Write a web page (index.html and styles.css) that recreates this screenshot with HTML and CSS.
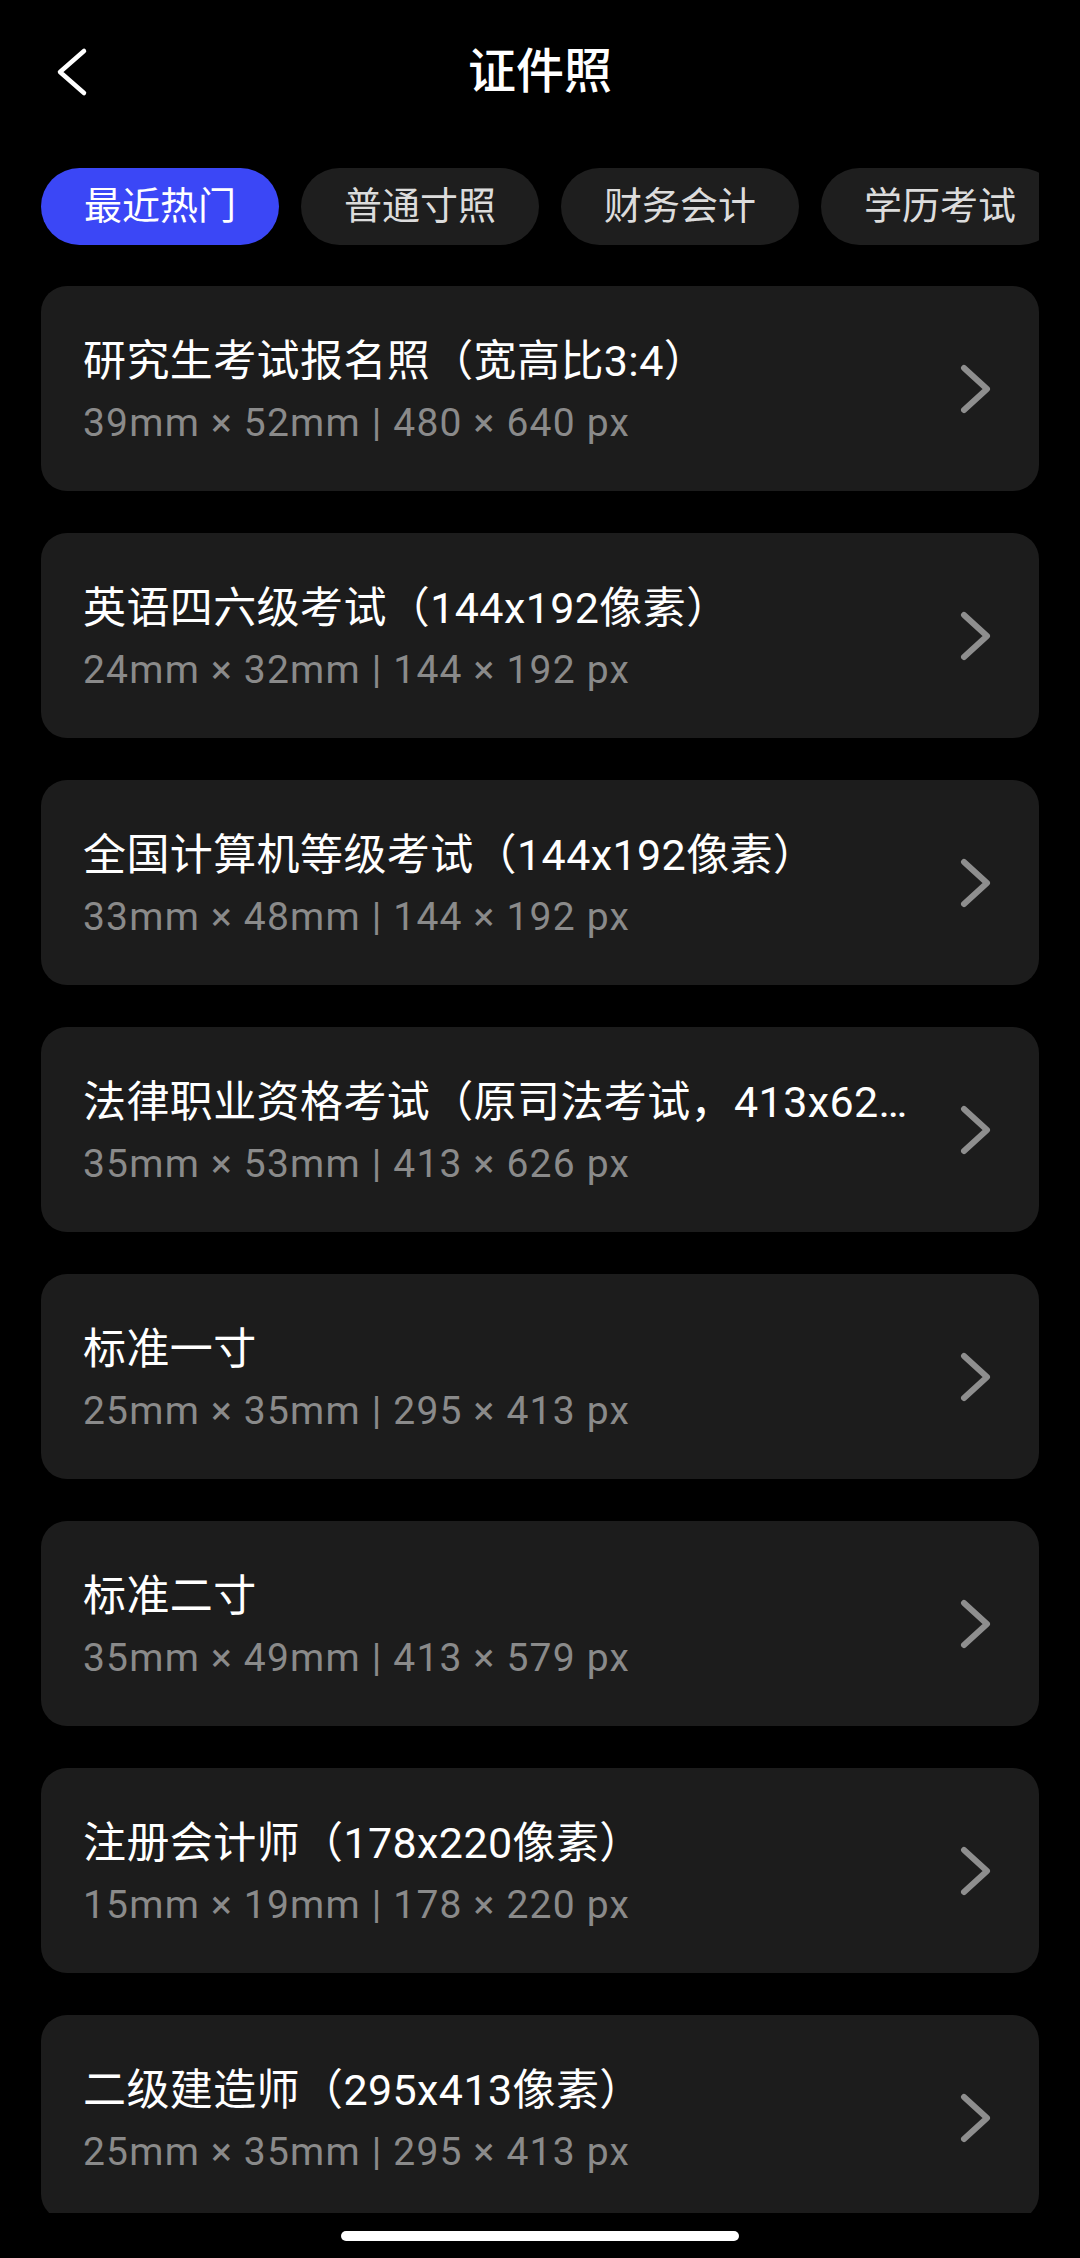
FILE: index.html
```html
<!DOCTYPE html>
<html lang="zh-CN">
<head>
<meta charset="utf-8">
<title>证件照</title>
<link rel="stylesheet" href="styles.css">
</head>
<body>
<div class="page">
  <header class="header">
    <button class="back" aria-label="返回">
      <svg width="36" height="50" viewBox="0 0 36 50"><path d="M30 4 L6 25 L30 46" fill="none" stroke="#fff" stroke-width="4.5" stroke-linecap="round" stroke-linejoin="round"/></svg>
    </button>
    <h1 class="title">证件照</h1>
  </header>

  <nav class="tabs">
    <div class="tab active">最近热门</div>
    <div class="tab">普通寸照</div>
    <div class="tab">财务会计</div>
    <div class="tab">学历考试</div>
  </nav>

  <main class="list">
    <div class="card">
      <div class="info"><div class="name">研究生考试报名照（宽高比3:4）</div><div class="spec">39mm × 52mm | 480 × 640 px</div></div>
      <svg class="chev" width="34" height="50" viewBox="0 0 34 50"><path d="M5 4 L28 25 L5 46" fill="none" stroke="#8e8e8e" stroke-width="6" stroke-linecap="round" stroke-linejoin="round"/></svg>
    </div>
    <div class="card">
      <div class="info"><div class="name">英语四六级考试（144x192像素）</div><div class="spec">24mm × 32mm | 144 × 192 px</div></div>
      <svg class="chev" width="34" height="50" viewBox="0 0 34 50"><path d="M5 4 L28 25 L5 46" fill="none" stroke="#8e8e8e" stroke-width="6" stroke-linecap="round" stroke-linejoin="round"/></svg>
    </div>
    <div class="card">
      <div class="info"><div class="name">全国计算机等级考试（144x192像素）</div><div class="spec">33mm × 48mm | 144 × 192 px</div></div>
      <svg class="chev" width="34" height="50" viewBox="0 0 34 50"><path d="M5 4 L28 25 L5 46" fill="none" stroke="#8e8e8e" stroke-width="6" stroke-linecap="round" stroke-linejoin="round"/></svg>
    </div>
    <div class="card">
      <div class="info"><div class="name">法律职业资格考试（原司法考试，413x626像素）</div><div class="spec">35mm × 53mm | 413 × 626 px</div></div>
      <svg class="chev" width="34" height="50" viewBox="0 0 34 50"><path d="M5 4 L28 25 L5 46" fill="none" stroke="#8e8e8e" stroke-width="6" stroke-linecap="round" stroke-linejoin="round"/></svg>
    </div>
    <div class="card">
      <div class="info"><div class="name">标准一寸</div><div class="spec">25mm × 35mm | 295 × 413 px</div></div>
      <svg class="chev" width="34" height="50" viewBox="0 0 34 50"><path d="M5 4 L28 25 L5 46" fill="none" stroke="#8e8e8e" stroke-width="6" stroke-linecap="round" stroke-linejoin="round"/></svg>
    </div>
    <div class="card">
      <div class="info"><div class="name">标准二寸</div><div class="spec">35mm × 49mm | 413 × 579 px</div></div>
      <svg class="chev" width="34" height="50" viewBox="0 0 34 50"><path d="M5 4 L28 25 L5 46" fill="none" stroke="#8e8e8e" stroke-width="6" stroke-linecap="round" stroke-linejoin="round"/></svg>
    </div>
    <div class="card">
      <div class="info"><div class="name">注册会计师（178x220像素）</div><div class="spec">15mm × 19mm | 178 × 220 px</div></div>
      <svg class="chev" width="34" height="50" viewBox="0 0 34 50"><path d="M5 4 L28 25 L5 46" fill="none" stroke="#8e8e8e" stroke-width="6" stroke-linecap="round" stroke-linejoin="round"/></svg>
    </div>
    <div class="card">
      <div class="info"><div class="name">二级建造师（295x413像素）</div><div class="spec">25mm × 35mm | 295 × 413 px</div></div>
      <svg class="chev" width="34" height="50" viewBox="0 0 34 50"><path d="M5 4 L28 25 L5 46" fill="none" stroke="#8e8e8e" stroke-width="6" stroke-linecap="round" stroke-linejoin="round"/></svg>
    </div>
  </main>

  <footer class="home-bar"><div class="indicator"></div></footer>
</div>
</body>
</html>
```

FILE: styles.css
```css
* { box-sizing: border-box; }
html, body {
  margin: 0;
  padding: 0;
  background: #000;
}
body {
  font-family: "Noto Sans CJK SC", "Roboto", sans-serif;
  color: #fff;
}
.page {
  width: 1080px;
  height: 2258px;
  overflow: hidden;
  display: flex;
  flex-direction: column;
}
.header {
  height: 142px;
  padding-bottom: 8px;
  display: flex;
  align-items: center;
  justify-content: center;
  position: relative;
  flex: none;
}
.back {
  position: absolute;
  left: 54px;
  top: 47px;
  background: none;
  border: 0;
  padding: 0;
  width: 36px;
  height: 50px;
  display: flex;
}
.title {
  margin: 0;
  font-size: 48px;
  font-weight: 500;
  line-height: 68px;
}
.tabs {
  flex: none;
  margin: 26px 41px 0;
  display: flex;
  gap: 22px;
  overflow: hidden;
  height: 77px;
}
.tab {
  flex: none;
  width: 238px;
  height: 77px;
  border-radius: 39px;
  background: #1e1e1e;
  color: #dcdcdc;
  font-size: 38px;
  line-height: 70px;
  text-align: center;
}
.tab.active {
  background: #3b47f6;
  color: #fff;
}
.list {
  flex: none;
  margin-top: 41px;
  height: 1927px;
  overflow: hidden;
  padding: 0 41px;
  display: flex;
  flex-direction: column;
  gap: 42px;
}
.card {
  flex: none;
  height: 205px;
  background: #1c1c1c;
  border-radius: 26px;
  display: flex;
  align-items: center;
  padding: 0 46px 0 42px;
}
.info {
  flex: 1;
  min-width: 0;
  padding-bottom: 2px;
}
.name {
  font-family: "Roboto", "Noto Sans CJK SC", sans-serif;
  font-size: 43px;
  line-height: 62px;
  font-weight: 400;
  letter-spacing: 0.4px;
  color: #fff;
  white-space: nowrap;
  overflow: hidden;
  text-overflow: ellipsis;
}
.spec {
  margin-top: 9px;
  font-family: "Roboto", "Noto Sans CJK SC", sans-serif;
  font-size: 39px;
  line-height: 44px;
  letter-spacing: 1.2px;
  color: #8a8a8a;
}
.chev {
  flex: none;
  margin-left: 37px;
}
.home-bar {
  flex: 1;
  display: flex;
  justify-content: center;
  padding-top: 18px;
}
.indicator {
  width: 398px;
  height: 10px;
  border-radius: 5px;
  background: #fff;
}
```
